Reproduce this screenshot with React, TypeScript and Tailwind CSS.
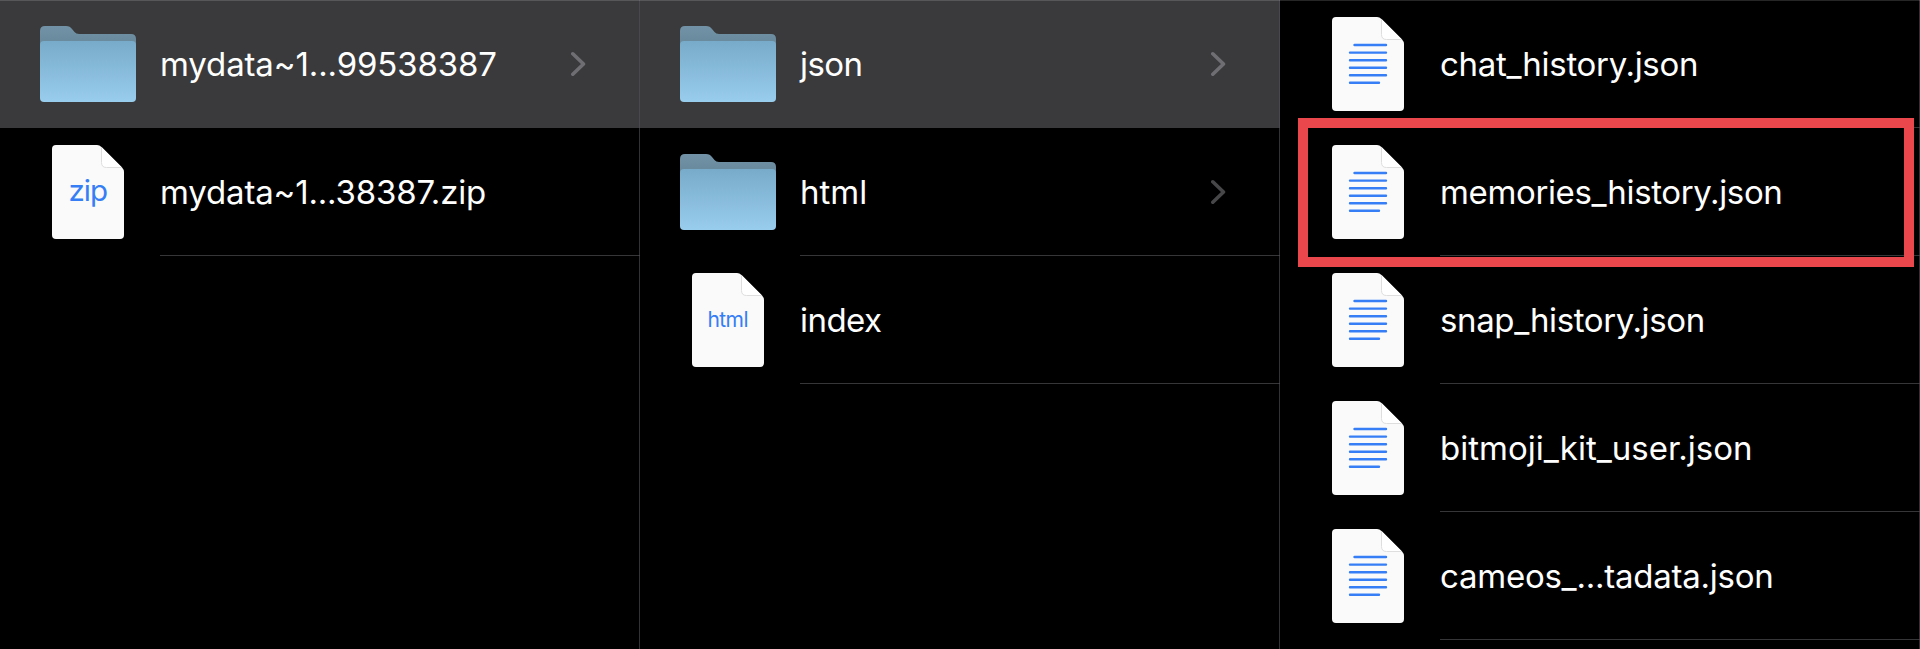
import React from "react";

type Kind = "folder" | "zip" | "html" | "text";

interface Entry {
  name: string;
  kind: Kind;
  tracking: string;
  selected?: boolean;
  highlighted?: boolean;
}

const columns: Entry[][] = [
  [
    { name: "mydata~1...99538387", kind: "folder", tracking: "tracking-[-0.13px]", selected: true },
    { name: "mydata~1...38387.zip", kind: "zip", tracking: "tracking-[-0.17px]" },
  ],
  [
    { name: "json", kind: "folder", tracking: "tracking-[-0.6px]", selected: true },
    { name: "html", kind: "folder", tracking: "tracking-[0px]" },
    { name: "index", kind: "html", tracking: "tracking-[-0.55px]" },
  ],
  [
    { name: "chat_history.json", kind: "text", tracking: "tracking-[-0.3px]" },
    { name: "memories_history.json", kind: "text", tracking: "tracking-[-0.36px]", highlighted: true },
    { name: "snap_history.json", kind: "text", tracking: "tracking-[-0.38px]" },
    { name: "bitmoji_kit_user.json", kind: "text", tracking: "tracking-[0px]" },
    { name: "cameos_...tadata.json", kind: "text", tracking: "tracking-[-0.24px]" },
  ],
];

function FolderIcon() {
  return (
    <svg width="96" height="76" viewBox="0 0 96 76" className="block">
      <defs>
        <linearGradient id="front" x1="0" y1="0" x2="0" y2="1">
          <stop offset="0" stopColor="#78abc9" />
          <stop offset="1" stopColor="#99cdee" />
        </linearGradient>
        <linearGradient id="back" x1="0" y1="0" x2="0" y2="1">
          <stop offset="0" stopColor="#7293a7" />
          <stop offset="0.35" stopColor="#6a8b9e" />
        </linearGradient>
      </defs>
      <path
        d="M0 5Q0 0 5 0H26C29 0 30.500 1 32 3L34.500 6Q36 8 39 8H91Q96 8 96 13V40H0Z"
        fill="url(#back)"
      />
      <path
        d="M0 19Q0 15 4 15H92Q96 15 96 19V72Q96 76 92 76H4Q0 76 0 72Z"
        fill="url(#front)"
      />
    </svg>
  );
}

function DocumentIcon({ kind }: { kind: Kind }) {
  return (
    <svg width="72" height="94" viewBox="0 0 72 94" className="block">
      <path
        d="M0 4Q0 0 4 0H45Q47.500 0 49.500 2L70 22.500Q72 24.500 72 27V90Q72 94 68 94H4Q0 94 0 90Z"
        fill="#fafafa"
      />
      <path d="M49.500 2L70 22.500H54Q49.500 22.500 49.500 18Z" fill="#ffffff" />
      <path d="M49.500 2V17.500Q49.500 22.500 54.500 22.500H70" fill="none" stroke="#dedede" />
      {kind === "text" && (
        <path
          d="M22.500 28H54M18 35.600H54M18 43.200H54M18 50.700H54M18 58.200H54M18 65.800H47"
          fill="none"
          stroke="#367ef5"
          strokeWidth="2.4"
          strokeLinecap="round"
        />
      )}
      {kind === "zip" && (
        <text x="35.800" y="56" textAnchor="middle" className="fill-[#367ef5] font-[Inter,sans-serif] text-[29.5px] tracking-[-1px]">
          zip
        </text>
      )}
      {kind === "html" && (
        <text x="35.700" y="54" textAnchor="middle" className="fill-[#367ef5] font-[Inter,sans-serif] text-[21px] tracking-[-0.6px]">
          html
        </text>
      )}
    </svg>
  );
}

function Chevron() {
  return (
    <svg width="16" height="27" viewBox="0 0 16 27" className="mr-[53px] block shrink-0">
      <path
        d="M1.800 3.800L12.500 14L1.800 24.200"
        fill="none"
        stroke="#ebebf5"
        strokeOpacity="0.3"
        strokeWidth="3.6"
        strokeLinecap="round"
        strokeLinejoin="round"
      />
    </svg>
  );
}

function Row({ entry }: { entry: Entry }) {
  return (
    <li className={`relative flex h-32 shrink-0 ${entry.selected ? "bg-[#3a3a3c]" : ""}`}>
      <div className="flex w-40 shrink-0 items-center pl-10">
        <div className="flex w-24 justify-center">
          {entry.kind === "folder" ? <FolderIcon /> : <DocumentIcon kind={entry.kind} />}
        </div>
      </div>
      <div
        className={`flex min-w-0 flex-1 items-center justify-between border-b ${
          entry.selected ? "border-transparent" : "border-[#363638]"
        }`}
      >
        <span className={`whitespace-nowrap text-[33px] leading-10 text-white ${entry.tracking}`}>{entry.name}</span>
        {entry.kind === "folder" && <Chevron />}
      </div>
      {entry.highlighted && (
        <div className="absolute -top-[10px] left-[18px] z-10 h-[149px] w-[616px] border-[10px] border-[#e9474b]" />
      )}
    </li>
  );
}

export default function App() {
  return (
    <main className="relative flex h-[649px] w-[1920px] overflow-hidden bg-black font-[Inter,sans-serif]">
      {columns.map((entries, i) => (
        <section key={i} className="relative w-[640px] shrink-0">
          <ul className="flex flex-col">
            {entries.map((entry) => (
              <Row key={entry.name} entry={entry} />
            ))}
          </ul>
          <div className="absolute inset-y-0 right-0 w-px bg-[#545458]/60" />
        </section>
      ))}
      <div className="absolute inset-x-0 top-0 h-px bg-white/15" />
    </main>
  );
}
